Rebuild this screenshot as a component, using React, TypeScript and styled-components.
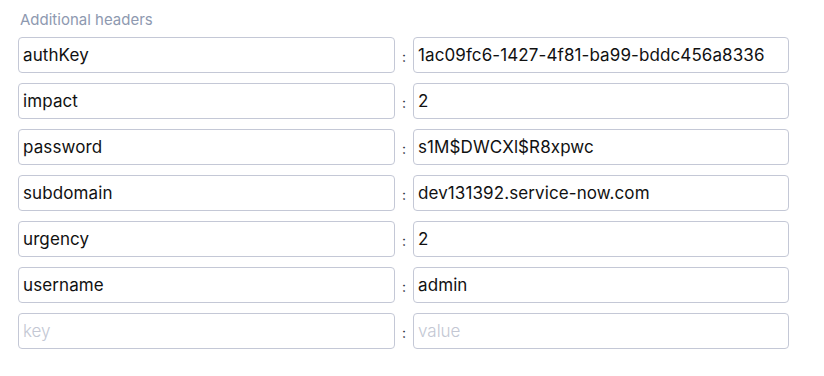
import React from "react";
import styled, { createGlobalStyle } from "styled-components";

const Global = createGlobalStyle`
  html, body { margin: 0; padding: 0; background: #ffffff; }
  body { font-family: Inter, "Noto Sans", sans-serif; }
`;

const Wrapper = styled.div`
  padding: 11px 18px;
  width: 771px;
`;

const Label = styled.div`
  font-size: 15px;
  line-height: 18px;
  color: #8e99b0;
  padding-left: 2px;
  margin-bottom: 8px;
`;

const Grid = styled.div`
  display: grid;
  grid-template-columns: 377px 18px 376px;
  row-gap: 10px;
`;

const Field = styled.input`
  box-sizing: border-box;
  height: 36px;
  width: 100%;
  margin: 0;
  padding: 0 4px;
  border: 1px solid #c4c8d6;
  border-radius: 4px;
  background: #ffffff;
  font-family: Inter, "Noto Sans", sans-serif;
  font-size: 17px;
  letter-spacing: 0.1px;
  color: #111111;
  outline: none;
  &::placeholder {
    color: #c3c7d3;
    font-weight: 300;
    letter-spacing: 0;
  }
`;

const Colon = styled.div`
  display: flex;
  align-items: center;
  justify-content: center;
  font-size: 14px;
  color: #2a3040;
  padding-top: 2px;
`;

const rows: [string, string][] = [
  ["authKey", "1ac09fc6-1427-4f81-ba99-bddc456a8336"],
  ["impact", "2"],
  ["password", "s1M$DWCXl$R8xpwc"],
  ["subdomain", "dev131392.service-now.com"],
  ["urgency", "2"],
  ["username", "admin"],
  ["", ""],
];

export default function App() {
  return (
    <Wrapper>
      <Global />
      <Label>Additional headers</Label>
      <Grid>
        {rows.map(([k, v], i) => (
          <React.Fragment key={i}>
            <Field defaultValue={k} placeholder="key" />
            <Colon>:</Colon>
            <Field defaultValue={v} placeholder="value" />
          </React.Fragment>
        ))}
      </Grid>
    </Wrapper>
  );
}
